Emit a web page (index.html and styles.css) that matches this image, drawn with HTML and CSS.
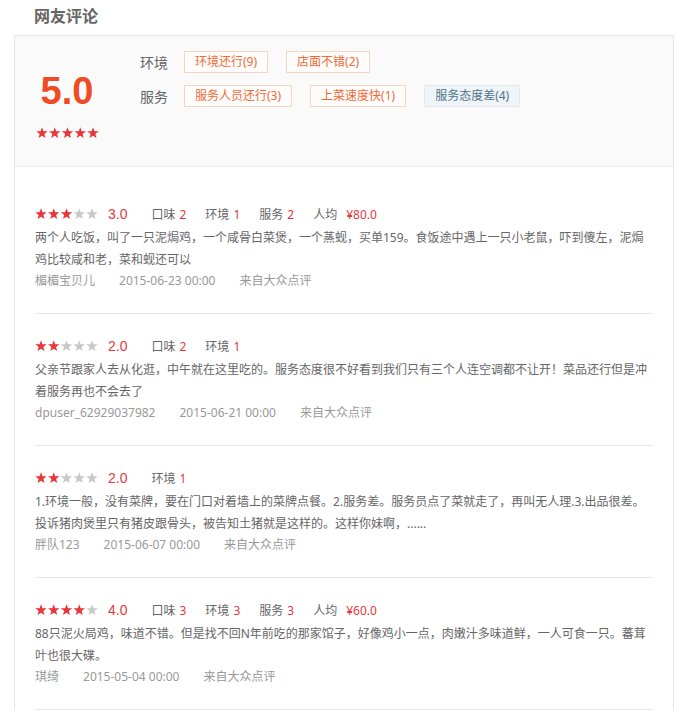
FILE: index.html
```html
<!DOCTYPE html>
<html lang="zh-CN">

<head>
  <meta charset="UTF-8" />
  <meta name="viewport" content="width=device-width, initial-scale=1.0">
  <title>网友评论</title>
  <link rel="stylesheet" href="styles.css">
</head>

<body>
  <svg class="defs" width="0" height="0">
    <symbol id="star" viewBox="0 0 12 12">
      <polygon points="6,0.2 7.44,4.22 11.71,4.35 8.33,6.96 9.53,11.05 6,8.65 2.47,11.05 3.67,6.96 0.29,4.35 4.56,4.22" />
    </symbol>
  </svg>

  <h3 class="title">网友评论</h3>

  <div class="comments">
    <div class="summary">
      <div class="score-box">
        <div class="score">5.0</div>
        <svg class="stars" width="63" height="12" viewBox="0 0 63 12">
          <use href="#star" class="on" x="0" width="12" height="12" />
          <use href="#star" class="on" x="12.75" width="12" height="12" />
          <use href="#star" class="on" x="25.5" width="12" height="12" />
          <use href="#star" class="on" x="38.25" width="12" height="12" />
          <use href="#star" class="on" x="51" width="12" height="12" />
        </svg>
      </div>
      <div class="tag-rows">
        <div class="tag-row">
          <span class="tag-label">环境</span>
          <span class="tag">环境还行(9)</span>
          <span class="tag">店面不错(2)</span>
        </div>
        <div class="tag-row">
          <span class="tag-label">服务</span>
          <span class="tag">服务人员还行(3)</span>
          <span class="tag">上菜速度快(1)</span>
          <span class="tag tag-bad">服务态度差(4)</span>
        </div>
      </div>
    </div>

    <ul class="review-list">
      <li class="review">
        <div class="review-score">
          <svg class="stars" width="63" height="12" viewBox="0 0 63 12">
            <use href="#star" class="on" x="0" width="12" height="12" />
            <use href="#star" class="on" x="12.75" width="12" height="12" />
            <use href="#star" class="on" x="25.5" width="12" height="12" />
            <use href="#star" x="38.25" width="12" height="12" />
            <use href="#star" x="51" width="12" height="12" />
          </svg>
          <span class="rate">3.0</span>
          <span class="sub">口味<em>2</em></span>
          <span class="sub">环境<em>1</em></span>
          <span class="sub">服务<em>2</em></span>
          <span class="sub">人均<em class="price">¥80.0</em></span>
        </div>
        <p class="review-text">两个人吃饭，叫了一只泥焗鸡，一个咸骨白菜煲，一个蒸蚬，买单159。食饭途中遇上一只小老鼠，吓到傻左，泥焗鸡比较咸和老，菜和蚬还可以</p>
        <div class="review-meta">
          <span>楣楣宝贝儿</span>
          <span>2015-06-23 00:00</span>
          <span>来自大众点评</span>
        </div>
      </li>

      <li class="review">
        <div class="review-score">
          <svg class="stars" width="63" height="12" viewBox="0 0 63 12">
            <use href="#star" class="on" x="0" width="12" height="12" />
            <use href="#star" class="on" x="12.75" width="12" height="12" />
            <use href="#star" x="25.5" width="12" height="12" />
            <use href="#star" x="38.25" width="12" height="12" />
            <use href="#star" x="51" width="12" height="12" />
          </svg>
          <span class="rate">2.0</span>
          <span class="sub">口味<em>2</em></span>
          <span class="sub">环境<em>1</em></span>
        </div>
        <p class="review-text">父亲节跟家人去从化逛，中午就在这里吃的。服务态度很不好看到我们只有三个人连空调都不让开！菜品还行但是冲着服务再也不会去了</p>
        <div class="review-meta">
          <span>dpuser_62929037982</span>
          <span>2015-06-21 00:00</span>
          <span>来自大众点评</span>
        </div>
      </li>

      <li class="review">
        <div class="review-score">
          <svg class="stars" width="63" height="12" viewBox="0 0 63 12">
            <use href="#star" class="on" x="0" width="12" height="12" />
            <use href="#star" class="on" x="12.75" width="12" height="12" />
            <use href="#star" x="25.5" width="12" height="12" />
            <use href="#star" x="38.25" width="12" height="12" />
            <use href="#star" x="51" width="12" height="12" />
          </svg>
          <span class="rate">2.0</span>
          <span class="sub">环境<em>1</em></span>
        </div>
        <p class="review-text">1.环境一般，没有菜牌，要在门口对着墙上的菜牌点餐。2.服务差。服务员点了菜就走了，再叫无人理.3.出品很差。<br>投诉猪肉煲里只有猪皮跟骨头，被告知土猪就是这样的。这样你妹啊，......</p>
        <div class="review-meta">
          <span>胖队123</span>
          <span>2015-06-07 00:00</span>
          <span>来自大众点评</span>
        </div>
      </li>

      <li class="review">
        <div class="review-score">
          <svg class="stars" width="63" height="12" viewBox="0 0 63 12">
            <use href="#star" class="on" x="0" width="12" height="12" />
            <use href="#star" class="on" x="12.75" width="12" height="12" />
            <use href="#star" class="on" x="25.5" width="12" height="12" />
            <use href="#star" class="on" x="38.25" width="12" height="12" />
            <use href="#star" x="51" width="12" height="12" />
          </svg>
          <span class="rate">4.0</span>
          <span class="sub">口味<em>3</em></span>
          <span class="sub">环境<em>3</em></span>
          <span class="sub">服务<em>3</em></span>
          <span class="sub">人均<em class="price">¥60.0</em></span>
        </div>
        <p class="review-text">88只泥火局鸡，味道不错。但是找不回N年前吃的那家馆子，好像鸡小一点，肉嫩汁多味道鲜，一人可食一只。蕃茸叶也很大碟。</p>
        <div class="review-meta">
          <span>琪绮</span>
          <span>2015-05-04 00:00</span>
          <span>来自大众点评</span>
        </div>
      </li>
    </ul>
  </div>
</body>

</html>
```

FILE: styles.css
```css
body {
  margin: 0;
  font-family: 'Noto Sans', 'Noto Sans CJK SC', sans-serif;
  font-size: 12px;
  color: #666;
  background: #fff;
}

.defs {
  position: absolute;
  width: 0;
  height: 0;
}

.title {
  margin: 0;
  padding: 0 0 3px 34px;
  height: 32px;
  line-height: 32px;
  font-size: 16px;
  font-weight: bold;
  color: #666;
}

.comments {
  width: 658px;
  margin-left: 14px;
  border: 1px solid #e6e6e6;
  border-bottom: none;
}

/* top summary */
.summary {
  display: flex;
  box-sizing: border-box;
  height: 131px;
  padding: 15px 20px;
  background: #fafafa;
  border-bottom: 1px solid #ebebeb;
}

.score-box {
  width: 64px;
  display: flex;
  flex-direction: column;
  align-items: center;
}

.score {
  margin-top: 18px;
  font-family: 'Liberation Sans', sans-serif;
  font-size: 38px;
  font-weight: bold;
  line-height: 44px;
  color: #ef4b24;
}

.score-box .stars {
  margin-top: 14px;
}

.stars {
  display: block;
  fill: #c8c8c8;
}

.stars .on {
  fill: #e8363a;
}

.tag-rows {
  margin-left: 41px;
}

.tag-row {
  display: flex;
  align-items: center;
  height: 22px;
  margin-bottom: 12px;
}

.tag-label {
  width: 44px;
  font-size: 14px;
  color: #666;
}

.tag {
  box-sizing: border-box;
  height: 22px;
  line-height: 20px;
  padding: 0 10px;
  margin-right: 18px;
  border: 1px solid #f6d6c3;
  background: #fffdfb;
  color: #f06a38;
}

.tag-bad {
  border-color: #dfe9ee;
  background: #eef4f7;
  color: #4f7389;
}

/* reviews */
.review-list {
  list-style: none;
  margin: 0;
  padding: 15px 20px 0;
}

.review {
  padding: 21px 0 22px;
  border-bottom: 1px solid #e8e8e8;
}

.review-score {
  display: flex;
  align-items: center;
  height: 22px;
  margin-bottom: 2px;
}

.rate {
  margin-left: 10px;
  margin-right: 24px;
  font-family: 'Liberation Sans', sans-serif;
  font-size: 14px;
  color: #e4393c;
}

.sub {
  margin-right: 19px;
  color: #666;
}

.sub em {
  font-style: normal;
  margin-left: 4px;
  color: #e4393c;
}

.sub .price {
  margin-left: 9px;
}

.review-text {
  margin: 0;
  line-height: 22px;
  color: #666;
}

.review-meta {
  display: flex;
  gap: 24px;
  line-height: 20px;
  color: #999;
}
```
